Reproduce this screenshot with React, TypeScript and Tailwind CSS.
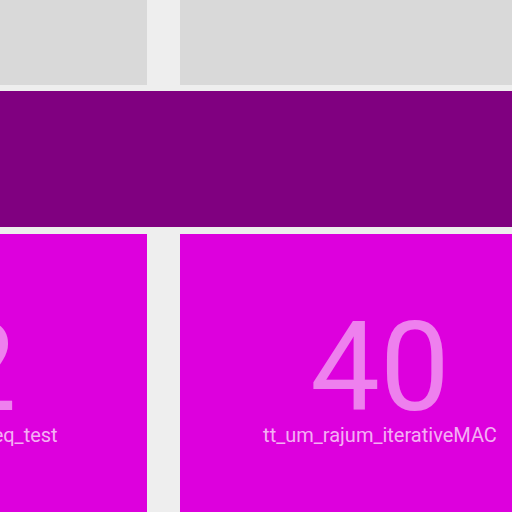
export default function App() {
  return (
    <div className="h-[512px] w-[512px] overflow-hidden bg-[#eeeeee] font-['Roboto',sans-serif]">
      <div className="-ml-[253px] flex w-[833px] flex-col">
        <div className="grid grid-cols-[400px_400px] gap-x-[33px]">
          <div className="h-[85px] bg-[#d9d9d9]" />
          <div className="h-[85px] bg-[#d9d9d9]" />
        </div>

        <div className="mt-[6px] h-[136px] bg-[#800080]" />

        <div className="mt-[7px] grid grid-cols-[400px_400px] gap-x-[33px]">
          <Tile value="32" label="tt_um_wokwi_mfreq_test" />
          <Tile value="40" label="tt_um_rajum_iterativeMAC" />
        </div>
      </div>
    </div>
  );
}

function Tile({ value, label }: { value: string; label: string }) {
  return (
    <div className="flex h-[400px] flex-col items-center bg-[#dd00dd] pt-[72px]">
      <div className="h-[119px] text-[124px] leading-none text-white/50">
        {value}
      </div>
      <div className="text-[20px] leading-none text-white/70">{label}</div>
    </div>
  );
}
